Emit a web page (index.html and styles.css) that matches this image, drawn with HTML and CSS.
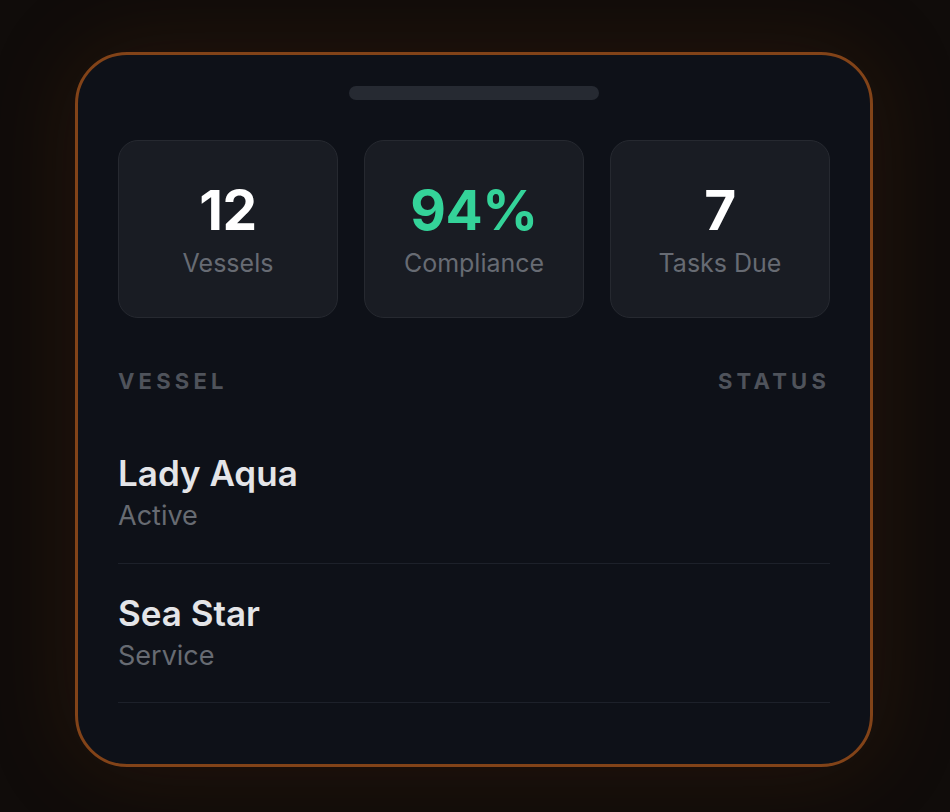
FILE: index.html
```html
<!DOCTYPE html>
<html lang="en">
<head>
<meta charset="utf-8">
<title>Fleet</title>
<link rel="stylesheet" href="styles.css">
</head>
<body>
<div class="card">
  <div class="handle"></div>
  <div class="stats">
    <div class="stat"><div class="num">12</div><div class="lbl">Vessels</div></div>
    <div class="stat"><div class="num green">94%</div><div class="lbl">Compliance</div></div>
    <div class="stat"><div class="num">7</div><div class="lbl">Tasks Due</div></div>
  </div>
  <div class="head"><span>VESSEL</span><span>STATUS</span></div>
  <div class="row"><div class="name">Lady Aqua</div><div class="sub">Active</div></div>
  <div class="row"><div class="name">Sea Star</div><div class="sub">Service</div></div>
</div>
</body>
</html>
```

FILE: styles.css
```css
html, body {
  margin: 0;
  padding: 0;
  background: #100c0a;
  font-family: Inter, "Noto Sans", sans-serif;
}
body {
  width: 950px;
  height: 812px;
  overflow: hidden;
}
.card {
  margin: 52px 0 0 75px;
  width: 798px;
  height: 715px;
  box-sizing: border-box;
  border: 3px solid #824318;
  border-radius: 52px;
  background: #0e1118;
  padding: 31px 40px 0 40px;
  box-shadow: 0 0 90px rgba(120, 55, 12, 0.22);
  display: flex;
  flex-direction: column;
}
.handle {
  align-self: center;
  width: 250px;
  height: 14px;
  border-radius: 7px;
  background: #262a32;
}
.stats {
  margin-top: 40px;
  display: flex;
  gap: 26px;
}
.stat {
  width: 220px;
  height: 178px;
  box-sizing: border-box;
  padding-top: 3px;
  background: #191c23;
  border: 1px solid #262930;
  border-radius: 20px;
  display: flex;
  flex-direction: column;
  align-items: center;
  justify-content: center;
}
.num {
  font-size: 55px;
  font-weight: 700;
  line-height: 1;
  color: #ffffff;
  letter-spacing: -0.5px;
}
.num.green { color: #34d399; }
.lbl {
  margin-top: 10px;
  font-size: 25px;
  line-height: 1.2;
  color: #676b73;
}
.head {
  margin-top: 50px;
  margin-bottom: 58px;
  display: flex;
  justify-content: space-between;
  font-size: 22px;
  font-weight: 700;
  line-height: 1.2;
  letter-spacing: 4.2px;
  color: #4f535b;
}
.row {
  padding: 0 0 30px 0;
  border-bottom: 1px solid #1d212a;
}
.row + .row { padding-top: 28px; }
.name {
  font-size: 35px;
  font-weight: 600;
  line-height: 1.2;
  color: #e4e5e8;
}
.sub {
  margin-top: 6px;
  font-size: 27px;
  line-height: 1.2;
  color: #676b72;
}
```
